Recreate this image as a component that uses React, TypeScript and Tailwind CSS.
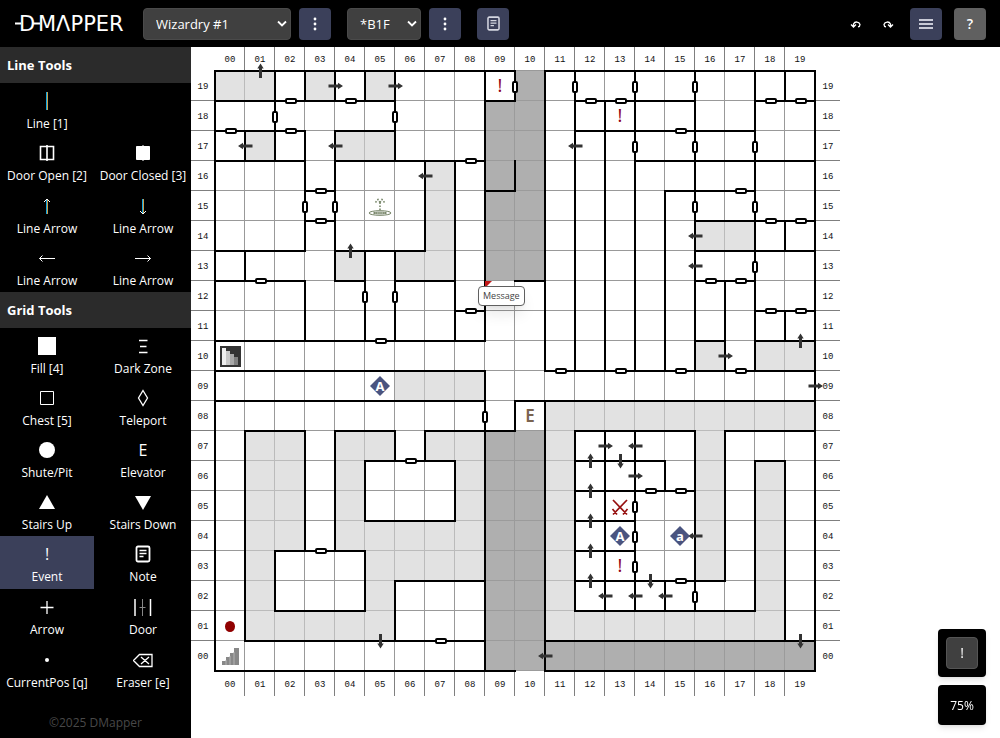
import React from 'react'

const CELL = 30
const SIZE = 600
const steps = Array.from({ length: 20 }, (_, i) => i)
const pad = (n: number) => String(n).padStart(2, '0')

// Walls: [line, from, to] in cell units, counted from the top left corner.
const hWalls: number[][] = [
  [0, 0, 10], [0, 11, 20],
  [1, 0, 6], [1, 9, 10], [1, 12, 16], [1, 18, 20],
  [2, 0, 3], [2, 4, 6], [2, 12, 18],
  [3, 0, 3], [3, 4, 9], [3, 14, 20],
  [4, 3, 4], [4, 9, 10], [4, 15, 18],
  [5, 3, 4], [5, 16, 20],
  [6, 0, 3], [6, 4, 7], [6, 16, 20],
  [7, 0, 3], [7, 4, 5], [7, 6, 8], [7, 10, 11], [7, 16, 18],
  [8, 8, 9], [8, 18, 20],
  [9, 0, 9], [9, 16, 17], [9, 18, 20],
  [10, 0, 9], [10, 11, 20],
  [11, 0, 9], [11, 10, 20],
  [12, 1, 3], [12, 4, 6], [12, 7, 10], [12, 12, 16], [12, 17, 20],
  [13, 5, 8], [13, 12, 15], [13, 18, 19],
  [14, 12, 16],
  [15, 5, 8], [15, 12, 14],
  [16, 2, 5], [16, 12, 14],
  [17, 6, 9], [17, 12, 17],
  [18, 2, 5], [18, 12, 18],
  [19, 1, 9], [19, 11, 20],
  [20, 0, 10], [20, 11, 20],
]
const vWalls: number[][] = [
  [0, 0, 20],
  [1, 2, 3], [1, 6, 7], [1, 12, 19],
  [2, 0, 3], [2, 16, 18],
  [3, 0, 1], [3, 2, 6], [3, 7, 9], [3, 12, 16],
  [4, 0, 1], [4, 2, 7], [4, 12, 16],
  [5, 0, 1], [5, 6, 9], [5, 13, 15], [5, 16, 18],
  [6, 0, 3], [6, 6, 9], [6, 12, 13], [6, 17, 19],
  [7, 3, 6], [7, 12, 13],
  [8, 3, 9], [8, 13, 15],
  [9, 0, 9], [9, 10, 20],
  [10, 0, 1], [10, 3, 4], [10, 11, 12],
  [11, 0, 10], [11, 11, 20],
  [12, 0, 10], [12, 12, 18],
  [13, 1, 10], [13, 12, 18],
  [14, 0, 10], [14, 12, 18],
  [15, 4, 10], [15, 13, 14], [15, 17, 18],
  [16, 0, 10], [16, 12, 18],
  [17, 7, 10], [17, 12, 17],
  [18, 0, 10], [18, 13, 18],
  [19, 0, 1], [19, 5, 6], [19, 8, 9], [19, 13, 19],
  [20, 0, 20],
]

// Doors on horizontal walls: [column, line]; on vertical walls: [line, row].
const hDoors: number[][] = [
  [2, 1], [4, 1], [12, 1], [13, 1], [18, 1], [19, 1], [0, 2], [2, 2], [15, 2], [8, 3],
  [3, 4], [17, 4], [3, 5], [18, 5], [19, 5], [1, 7], [16, 7], [17, 7], [8, 8], [18, 8],
  [19, 8], [5, 9], [11, 10], [13, 10], [15, 10], [17, 10], [6, 13], [14, 14], [15, 14],
  [3, 16], [15, 17], [7, 19],
]
const vDoors: number[][] = [
  [2, 1], [6, 1], [3, 4], [4, 4], [5, 7], [6, 7], [10, 0], [12, 0], [14, 0], [16, 0],
  [14, 2], [16, 2], [18, 2], [16, 4], [18, 4], [18, 6], [9, 11], [14, 14], [14, 15],
  [14, 16], [16, 17],
]

// Filled areas: [left, top, right, bottom] in cell units.
const lightFills: number[][] = [
  [0, 0, 2, 1], [3, 0, 4, 1], [5, 0, 6, 1], [1, 2, 2, 3], [4, 2, 6, 3],
  [7, 3, 8, 6], [6, 6, 8, 7], [4, 6, 5, 7], [16, 5, 18, 6], [16, 9, 17, 10],
  [18, 9, 20, 10], [6, 10, 9, 11], [11, 11, 20, 12], [11, 12, 12, 18],
  [11, 18, 19, 19], [16, 12, 17, 17], [18, 13, 19, 18], [1, 12, 3, 16],
  [1, 16, 2, 18], [1, 18, 6, 19], [4, 12, 6, 13], [4, 13, 5, 15], [4, 15, 9, 16],
  [5, 16, 9, 17], [5, 17, 6, 18], [7, 12, 9, 13], [8, 13, 9, 15],
]
const darkFills: number[][] = [
  [10, 0, 11, 1], [9, 1, 11, 7], [9, 12, 11, 20], [11, 19, 20, 20],
]

// Arrows: [x, y, rotation], x and y in cell units at the arrow's centre.
const arrows: number[][] = [
  [4, 0.5, 0], [6, 0.5, 0], [17, 9.5, 0], [20, 10.5, 0], [13, 12.5, 0], [14, 13.5, 0],
  [1, 2.5, 180], [4, 2.5, 180], [7, 3.5, 180], [12, 2.5, 180], [16, 5.5, 180],
  [16, 6.5, 180], [14, 12.5, 180], [16, 15.5, 180], [13, 17.5, 180], [14, 17.5, 180],
  [15, 17.5, 180], [11, 19.5, 180],
  [1.5, 0, 270], [4.5, 6, 270], [19.5, 9, 270], [12.5, 13, 270], [12.5, 14, 270],
  [12.5, 15, 270], [12.5, 16, 270], [12.5, 17, 270],
  [13.5, 13, 90], [14.5, 17, 90], [5.5, 19, 90], [19.5, 19, 90],
]

function Fills({ areas, className }: { areas: number[][]; className: string }) {
  return (
    <g className={className}>
      {areas.map(([l, t, r, b]) => (
        <rect key={`${l}-${t}`} x={l * CELL} y={t * CELL} width={(r - l) * CELL} height={(b - t) * CELL} />
      ))}
    </g>
  )
}

function Warp({ col, row, label }: { col: number; row: number; label: string }) {
  const x = col * CELL + 15
  const y = row * CELL + 15
  return (
    <g>
      <path d={`M${x} ${y - 10}L${x + 10} ${y}L${x} ${y + 10}L${x - 10} ${y}Z`} fill="#4a5480" />
      <text x={x} y={y + 5} textAnchor="middle" className="fill-white text-[13px] font-bold">{label}</text>
    </g>
  )
}

function DungeonMap() {
  return (
    <svg
      width="649"
      height="649"
      viewBox="-24 -24 649 649"
      role="img"
      aria-label="Map of B1F"
      className="block font-['Noto_Sans',sans-serif]"
    >
      <g stroke="#7f7f7f" shapeRendering="crispEdges">
        {steps.slice(1).map((i) => (
          <path key={i} d={`M${i * CELL - 0.5} -24V0M${i * CELL - 0.5} ${SIZE}V625M-24 ${i * CELL - 0.5}H0M${SIZE} ${i * CELL - 0.5}H625`} />
        ))}
      </g>
      <g stroke="#999999" shapeRendering="crispEdges">
        {[...steps, 20].map((i) => (
          <path key={i} d={`M${i * CELL - 0.5} 0V${SIZE}M0 ${i * CELL - 0.5}H${SIZE}`} />
        ))}
      </g>
      <Fills areas={lightFills} className="fill-[rgba(208,208,208,0.62)]" />
      <Fills areas={darkFills} className="fill-[rgba(155,155,155,0.8)]" />

      <g className="fill-[#111] font-['Liberation_Mono',monospace] text-[9px]" textAnchor="middle">
        {steps.map((i) => (
          <React.Fragment key={i}>
            <text x={i * CELL + 15} y={-9}>{pad(i)}</text>
            <text x={i * CELL + 15} y={616}>{pad(i)}</text>
            <text x={-12} y={i * CELL + 18}>{pad(19 - i)}</text>
            <text x={613} y={i * CELL + 18}>{pad(19 - i)}</text>
          </React.Fragment>
        ))}
      </g>

      <g stroke="#000" strokeWidth="2" strokeLinecap="square">
        {hWalls.map(([y, a, b]) => (
          <path key={`${y}-${a}`} d={`M${a * CELL} ${y * CELL}H${b * CELL}`} />
        ))}
        {vWalls.map(([x, a, b]) => (
          <path key={`${x}-${a}`} d={`M${x * CELL} ${a * CELL}V${b * CELL}`} />
        ))}
      </g>
      <g stroke="#000" strokeWidth="2" fill="#fff">
        {hDoors.map(([c, y]) => (
          <rect key={`${c}-${y}`} x={c * CELL + 11} y={y * CELL - 2} width="10" height="4" rx="1" />
        ))}
        {vDoors.map(([x, r]) => (
          <rect key={`${x}-${r}`} x={x * CELL - 2} y={r * CELL + 11} width="4" height="10" rx="1" />
        ))}
      </g>
      <g fill="#333333">
        {arrows.map(([x, y, turn]) => (
          <path
            key={`${x}-${y}`}
            d="M-7 -1.5H2.5V-3.2L7.5 0L2.5 3.2V1.5H-7Z"
            transform={`translate(${x * CELL + 0.5} ${y * CELL}) rotate(${turn})`}
          />
        ))}
      </g>

      <g className="fill-[#8f0018] text-[18px]" textAnchor="middle">
        <text x="285" y="21">!</text>
        <text x="405" y="51">!</text>
        <text x="405" y="501">!</text>
      </g>
      <text x="315" y="351" textAnchor="middle" className="fill-[#7a6350] text-[17px] font-semibold">E</text>

      <Warp col={5} row={10} label="A" />
      <Warp col={13} row={15} label="A" />
      <Warp col={15} row={15} label="a" />

      <g fill="none" stroke="#718062">
        <ellipse cx="165" cy="142" rx="11" ry="2.3" />
        <ellipse cx="165" cy="142" rx="6.500" ry="0.8" />
        <path strokeDasharray="1.500 1.500" strokeWidth="1.500" d="M165 139V131M165 131.500L163 128.500L160.500 131.500M165 131.500L167 128.500L169.500 131.500" />
      </g>

      <g>
        <rect x="5" y="275" width="21" height="21" fill="#333" />
        <path d="M7 277h4v17h-4z" fill="#eee" />
        <path d="M11 280h4v14h-4z" fill="#c8c8c8" />
        <path d="M15 283h4v11h-4z" fill="#a8a8a8" />
        <path d="M19 286h4v8h-4z" fill="#808080" />
      </g>
      <path d="M7 594V590H11V586H15V582H19V577H24V594Z" fill="#888" />
      <path d="M11 589V594M15 585V594M19 581V594" stroke="#b4b4b4" />
      <ellipse cx="15" cy="555.500" rx="5" ry="5.500" fill="#900000" />
      <g stroke="#960f0f" strokeWidth="1.700" fill="none">
        <path d="M398 429L412 443.500M412 429L398 443.500M397.500 438L402 443.500M412.500 438L408 443.500" />
      </g>
      <path d="M270 210H277L270 217Z" fill="#c01818" />
    </svg>
  )
}

const Svg = ({ children }: { children: React.ReactNode }) => (
  <svg width="20" height="20" viewBox="0 0 20 20" fill="none" stroke="#fff" aria-hidden="true">
    {children}
  </svg>
)

const noteShape = (
  <>
    <rect x="3.500" y="2.500" width="13" height="15" rx="1.500" strokeWidth="1.800" />
    <path strokeWidth="1.500" d="M6.500 6.500H13.500M6.500 9.500H13.500M6.500 12.500H10.500" />
  </>
)

type Tool = { label: string; icon: React.ReactNode; tall?: boolean; active?: boolean }

const lineTools: (Tool | null)[] = [
  { label: 'Line [1]', icon: <Svg><path d="M9.500 1V19" stroke="#12a5e0" /><path d="M10.500 1V19" stroke="#c9a04c" /></Svg> },
  null,
  { label: 'Door Open [2]', tall: true, icon: <Svg><path strokeWidth="1.600" d="M3.500 3.500H16.500V16.500H3.500ZM10 2V18" /></Svg> },
  { label: 'Door Closed [3]', tall: true, icon: <Svg><path fill="#fff" d="M3.500 3.500H16.500V16.500H3.500ZM10 2V18" /></Svg> },
  { label: 'Line Arrow', icon: <Svg><path d="M9.500 3V18" stroke="#12a5e0" /><path d="M10.500 3V18" stroke="#c9a04c" /><path d="M7 6L10 3L13 6" /></Svg> },
  { label: 'Line Arrow', icon: <Svg><path d="M9.500 3V18" stroke="#12a5e0" /><path d="M10.500 3V18" stroke="#c9a04c" /><path d="M7 15L10 18L13 15" /></Svg> },
  { label: 'Line Arrow', icon: <Svg><path d="M18 10.500H2.500M5.500 7.500L2.500 10.500L5.500 13.500" /></Svg> },
  { label: 'Line Arrow', icon: <Svg><path d="M2 10.500H17.500M14.500 7.500L17.500 10.500L14.500 13.500" /></Svg> },
]

const gridTools: (Tool | null)[] = [
  { label: 'Fill [4]', icon: <Svg><path d="M1 1H19V19H1Z" fill="#fff" stroke="none" /></Svg> },
  { label: 'Dark Zone', icon: <Svg><path strokeWidth="1.300" d="M6 4.500H14.500M7 10.500H13.500M6 16.500H14.500" /></Svg> },
  { label: 'Chest [5]', icon: <Svg><path d="M3.500 3.500H16.500V16.500H3.500Z" /></Svg> },
  { label: 'Teleport', icon: <Svg><path strokeWidth="1.300" d="M10 2.500L14.500 10L10 17.500L5.500 10Z" /></Svg> },
  { label: 'Shute/Pit', icon: <Svg><circle cx="10" cy="10" r="8" fill="#fff" stroke="none" /></Svg> },
  { label: 'Elevator', icon: 'E' },
  { label: 'Stairs Up', icon: <Svg><path d="M10 3L18 17H2Z" fill="#fff" stroke="none" /></Svg> },
  { label: 'Stairs Down', icon: <Svg><path d="M10 18L18 4H2Z" fill="#fff" stroke="none" /></Svg> },
  { label: 'Event', icon: '!', tall: true, active: true },
  { label: 'Note', tall: true, icon: <Svg>{noteShape}</Svg> },
  { label: 'Arrow', tall: true, icon: <Svg><path strokeWidth="1.300" d="M3.500 10.500H16.500M10 4V17" /></Svg> },
  { label: 'Door', tall: true, icon: <Svg><path strokeWidth="1.500" d="M2 2V19M17.500 2V19" /><path stroke="#888" d="M9.500 2V19M6.500 10.500H12.500" /></Svg> },
  { label: 'CurrentPos [q]', icon: <Svg><circle cx="10" cy="10" r="2" fill="#fff" stroke="none" /></Svg> },
  { label: 'Eraser [e]', icon: <Svg><path strokeWidth="1.300" d="M0.500 10.500L6.500 4.500H19V16.500H6.500ZM8 7L16 14M16 7L8 14" /></Svg> },
]

function ToolSection({ title, tools }: { title: string; tools: (Tool | null)[] }) {
  return (
    <section>
      <h2 className="h-9 bg-[#2b2b2b] px-[7px] text-[13px]/9 font-bold">{title}</h2>
      <div className="grid grid-cols-[94px_96px] gap-x-px">
        {tools.map((tool, i) =>
          tool ? (
            <button
              key={i}
              type="button"
              aria-pressed={!!tool.active}
              className={`flex flex-col items-center whitespace-nowrap pt-2 text-xs/[26px] ${tool.tall ? 'h-[53px]' : 'h-[52px]'} ${tool.active ? 'bg-[#3b405a]' : ''}`}
            >
              <span className="flex h-5 items-center text-base/5">{tool.icon}</span>
              {tool.label}
            </button>
          ) : (
            <div key={i} />
          ),
        )}
      </div>
    </section>
  )
}

function Picker({ label, value, className }: { label: string; value: string; className: string }) {
  return (
    <div className={`relative ${className}`}>
      <select aria-label={label} className="h-8 w-full appearance-none rounded border border-[#4a4a4a] bg-[#404040] pt-0.5 pl-3 text-[13px] text-white">
        <option>{value}</option>
      </select>
      <svg className="pointer-events-none absolute top-3 right-1" width="10" height="8" viewBox="0 0 10 8" fill="none" stroke="#fff" strokeWidth="1.800" aria-hidden="true">
        <path d="M1 1.500L5 5.500L9 1.500" />
      </svg>
    </div>
  )
}

function IconButton({ label, className = 'bg-[#3b405a]', children }: { label: string; className?: string; children: React.ReactNode }) {
  return (
    <button type="button" aria-label={label} className={`flex size-8 shrink-0 items-center justify-center rounded text-sm ${className}`}>
      {children}
    </button>
  )
}

const Dots = () => (
  <svg width="4" height="14" viewBox="0 0 4 14" fill="#fff" aria-hidden="true">
    <circle cx="2" cy="2" r="1.400" />
    <circle cx="2" cy="7" r="1.400" />
    <circle cx="2" cy="12" r="1.400" />
  </svg>
)

export default function App() {
  return (
    <div className="flex min-h-screen flex-col bg-white font-['Open_Sans','Noto_Sans',sans-serif] text-white">
      <header className="flex h-[47px] items-center bg-black pr-3.5 pl-[15px]">
        <svg width="118" height="31" viewBox="0 -5 118 31" className="mr-2.5 shrink-0 fill-white font-['DejaVu_Sans',sans-serif] text-[21px]" role="img" aria-label="DMapper">
          <path d="M0 10.500H6M18 10.500H25" stroke="#fff" strokeWidth="2" />
          <text x="4" y="18">D</text>
          <text x="23" y="18">MΛPPER</text>
        </svg>
        <Picker label="Game" value="Wizardry #1" className="w-[148px]" />
        <div className="ml-2"><IconButton label="Game menu"><Dots /></IconButton></div>
        <Picker label="Floor" value="*B1F" className="ml-4 w-[74px]" />
        <div className="ml-2"><IconButton label="Floor menu"><Dots /></IconButton></div>
        <div className="ml-4">
          <IconButton label="Notes">
            <svg width="17" height="17" viewBox="0 0 20 20" fill="none" stroke="#d4d6e0" aria-hidden="true">{noteShape}</svg>
          </IconButton>
        </div>
        <div className="ml-auto flex">
          <IconButton label="Undo" className="">
            <svg width="12" height="10" viewBox="0 0 12 10" fill="none" stroke="#fff" strokeWidth="1.300" aria-hidden="true">
              <path d="M3.500 7.500V5A3.500 3.500 0 0 1 10 5.500Q10 7.500 8 7.800M1 5.500L3.500 8L6 5.500" />
            </svg>
          </IconButton>
          <IconButton label="Redo" className="">
            <svg width="12" height="10" viewBox="0 0 12 10" fill="none" stroke="#fff" strokeWidth="1.300" aria-hidden="true">
              <path d="M8.500 7.500V5A3.500 3.500 0 0 0 2 5.500Q2 7.500 4 7.800M11 5.500L8.500 8L6 5.500" />
            </svg>
          </IconButton>
        </div>
        <div className="ml-1.5 flex gap-3">
          <IconButton label="Menu">
            <svg width="14" height="12" viewBox="0 0 14 12" stroke="#c8cad6" strokeWidth="2" aria-hidden="true">
              <path d="M0 2H14M0 6H14M0 10H14" />
            </svg>
          </IconButton>
          <IconButton label="Help" className="bg-[#606060] font-semibold">?</IconButton>
        </div>
      </header>

      <div className="flex grow">
        <aside className="flex w-[191px] shrink-0 flex-col bg-black">
          <ToolSection title="Line Tools" tools={lineTools} />
          <ToolSection title="Grid Tools" tools={gridTools} />
          <p className="py-5 text-center text-xs/[18px] text-[#484848]">©2025 DMapper</p>
        </aside>
        <main className="grow">
          <div className="relative w-max">
            <DungeonMap />
            <div role="tooltip" className="absolute top-[239px] left-[287px] rounded border border-[#606060] bg-white px-1 text-[9px]/[18px] text-[#444] shadow-lg">
              Message
            </div>
          </div>
        </main>
      </div>

      <div className="fixed right-3.5 bottom-[13px] flex w-12 flex-col gap-2">
        <div className="rounded bg-black p-2 shadow-md">
          <IconButton label="Current tool: Event" className="border border-[#555] bg-[#404040]">!</IconButton>
        </div>
        <button type="button" className="h-10 rounded bg-black pt-0.5 text-xs shadow-md">75%</button>
      </div>
    </div>
  )
}
